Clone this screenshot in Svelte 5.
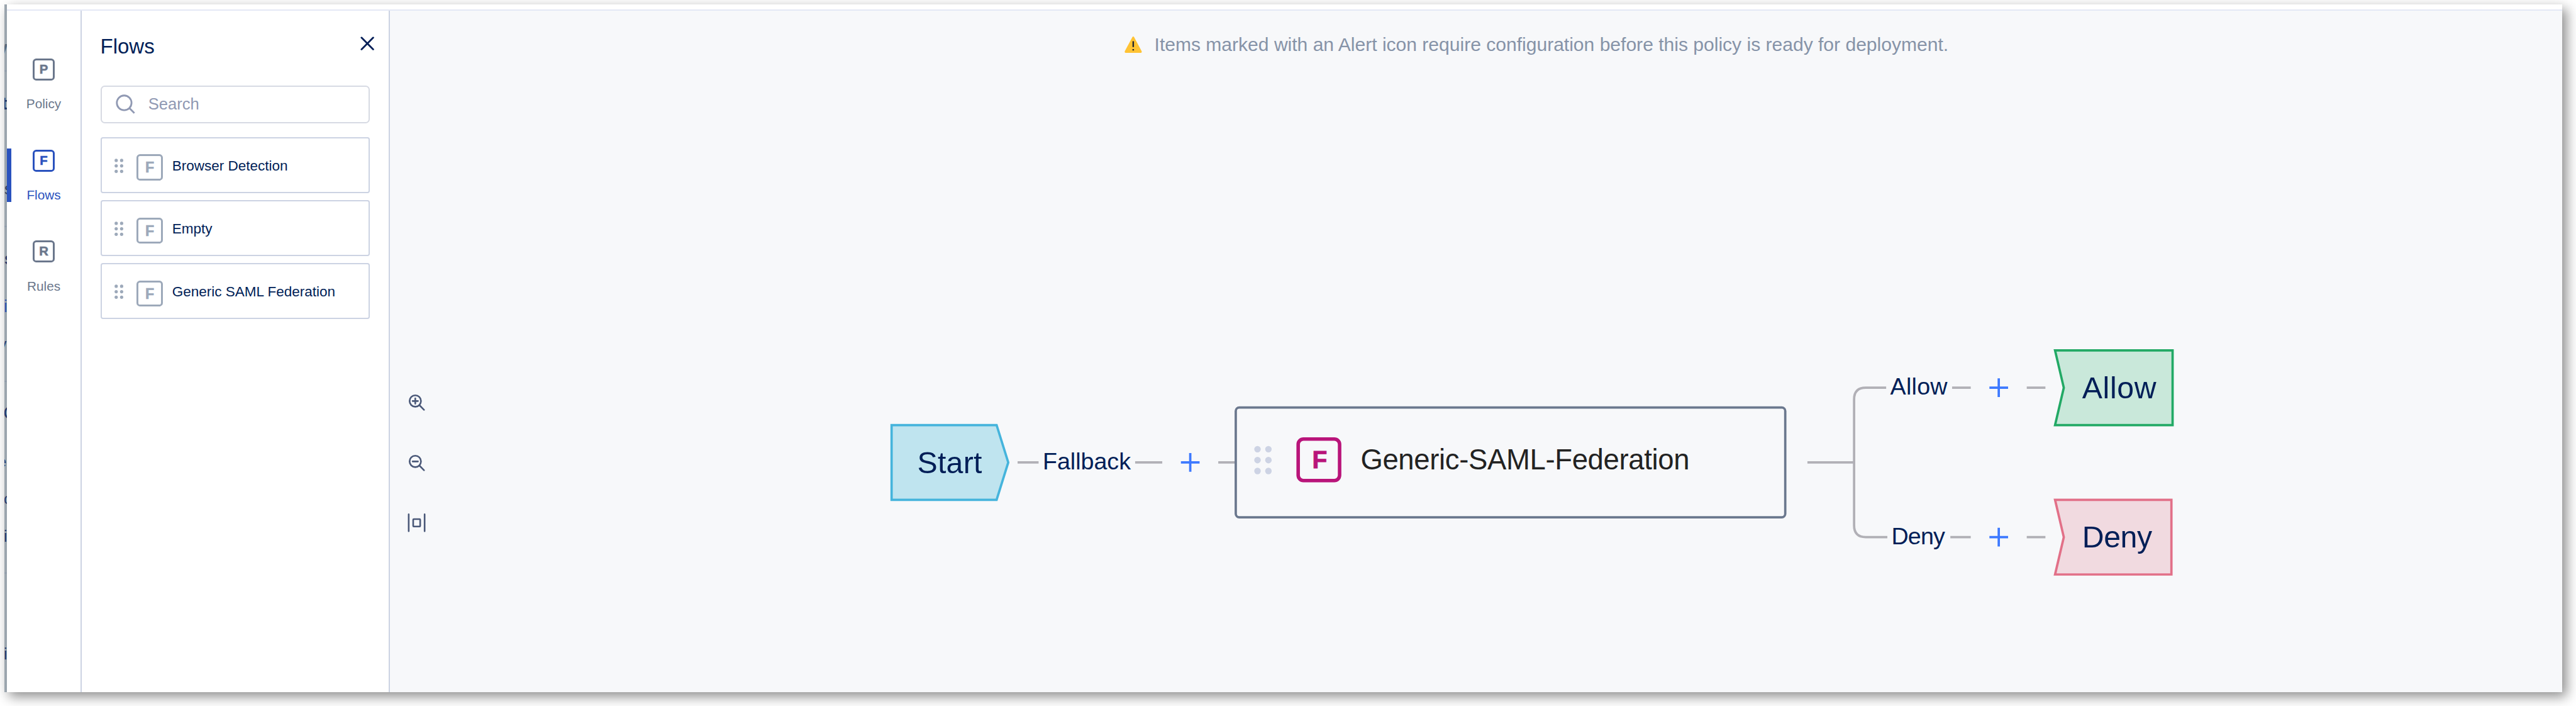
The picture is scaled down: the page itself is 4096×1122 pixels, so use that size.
<script>
  const tabs = [
    { letter: 'P', label: 'Policy', active: false },
    { letter: 'F', label: 'Flows', active: true },
    { letter: 'R', label: 'Rules', active: false }
  ];

  const flows = ['Browser Detection', 'Empty', 'Generic SAML Federation'];
  const gripRows = [0, 9.4, 18.8];

  // Slivers of the page underneath that stay visible beside the dialog.
  const slivers = [
    { t: 'y', x: -12, base: 92, size: 32, tone: 'slate' },
    { t: 't', x: -5, base: 187, size: 30, tone: 'bold' },
    { t: 's', x: 0, base: 333, size: 27, tone: 'dark' },
    { t: 's', x: 0, base: 453, size: 27, tone: 'bold' },
    { t: 'i', x: -1, base: 535, size: 29, tone: 'blue' },
    { t: 'v', x: -9, base: 599, size: 25, tone: 'navy' },
    { t: 'C', x: -2, base: 719, size: 32, tone: 'navy' },
    { t: 'e', x: -11, base: 801, size: 26, tone: 'navy' },
    { t: 'c', x: -1, base: 865, size: 26, tone: 'navy' },
    { t: 'i', x: -1, base: 929, size: 27, tone: 'navy' },
    { t: 'i', x: -1, base: 1131, size: 27, tone: 'navy' }
  ];
  const sliverLines = [121, 388, 654, 983];

  const branches = [
    { y: 664, label: 'Allow', labelX: 3240, labelW: 98, nearEnd: 3233, lineX: 3346, right: 3724, kind: 'allow', textX: 3569, textW: 127 },
    { y: 920, label: 'Deny', labelX: 3242, labelW: 92, nearEnd: 3235, lineX: 3343, right: 3722, kind: 'deny', textX: 3569, textW: 120 }
  ];
</script>

<div class="page">
  <div class="dialog">
    <svg class="strip" viewBox="0 0 4 1178" aria-hidden="true">
      {#each sliverLines as y}
        <rect class="sliver-line" x="0" y={y - 9} width="4" height="2" />
      {/each}
      {#each slivers as s}
        <text class="sliver {s.tone}" x={s.x} y={s.base - 8} font-size={s.size}>{s.t}</text>
      {/each}
    </svg>

    <div class="workspace">
      <nav class="rail">
        {#each tabs as tab}
          <button class="tab" class:active={tab.active}>
            <span class="tab-icon">{tab.letter}</span>
            <span class="tab-label">{tab.label}</span>
          </button>
        {/each}
      </nav>

      <aside class="panel">
        <header class="panel-head">
          <h2>Flows</h2>
          <svg class="close" viewBox="0 0 24 24"><path d="M2 2L22 22M22 2L2 22" /></svg>
        </header>
        <div class="search">
          <svg class="lens" viewBox="0 0 34 34"><circle cx="14.5" cy="14.5" r="12.6" /><path d="M23.4 23.4L32 32" /></svg>
          <span>Search</span>
        </div>
        <div class="cards">
          {#each flows as flow}
            <div class="card">
              <svg class="grip" viewBox="0 0 16 25">
                {#each gripRows as y}
                  <circle cx="3" cy={y + 3.1} r="2.8" /><circle cx="12.3" cy={y + 3.1} r="2.8" />
                {/each}
              </svg>
              <span class="flow-icon">F</span>
              <span class="flow-name">{flow}</span>
            </div>
          {/each}
        </div>
      </aside>

      <main class="canvas">
        <p class="notice">
          <svg class="alert" viewBox="0 0 30 28">
            <path class="tri" d="M13.5 1.1Q15 -1 16.5 1.1L29.4 25.2Q30.2 28 27.6 28H2.4Q-.2 28 .6 25.2Z" />
            <path class="mark" d="M15 8V18M15 21.7V24" />
          </svg>
          <span>Items marked with an Alert icon require configuration before this policy is ready for deployment.</span>
        </p>

        <div class="tools">
          <svg viewBox="0 0 32 32"><circle cx="13.3" cy="13.3" r="9.8" /><path d="M20.5 20.5L28.3 28.5M8.7 13.3H17.9M13.3 8.7V17.9" /></svg>
          <svg viewBox="0 0 32 32"><circle cx="13.3" cy="13.3" r="9.8" /><path d="M20.5 20.5L28.3 28.5M8.7 13.3H17.9" /></svg>
          <svg viewBox="0 0 32 32"><path d="M2 1.5V30.5M29.3 1.5V30.5" /><rect x="9.7" y="9.7" width="12" height="12.6" rx="1" /></svg>
        </div>

        <svg class="diagram" viewBox="668 18 3724 1168">
          <g class="wires">
            <path d="M1744 792H1780M1945.5 792H1992M2088 792H2118M3098 792H3178" />
            <path d="M3233 664H3198Q3178 664 3178 684V900Q3178 920 3198 920H3235" />
            {#each branches as b}
              <path d="M{b.lineX} {b.y}H3378M3474 {b.y}H3506" />
            {/each}
          </g>
          <g class="adds">
            <path d="M2024 792H2056M2040 776V808" />
            {#each branches as b}
              <path d="M3410 {b.y}H3442M3426 {b.y - 16}V{b.y + 16}" />
            {/each}
          </g>

          <path class="node start" d="M1528 728H1708L1728 792L1708 856H1528Z" />
          <text class="node-text" x="1572" y="810" textLength="111">Start</text>
          <text class="edge-text" x="1787" y="804" textLength="151">Fallback</text>

          <rect class="flow-node" x="2118" y="698" width="942" height="188" rx="6" />
          <g class="node-grip">
            {#each [769.3, 788, 806.7] as y}
              <circle cx="2155.3" cy={y} r="5.6" /><circle cx="2174" cy={y} r="5.6" />
            {/each}
          </g>
          <rect class="badge" x="2225" y="752" width="71" height="71" rx="9" />
          <text class="badge-text" x="2249" y="802">F</text>
          <text class="flow-text" x="2332" y="804" textLength="564">Generic-SAML-Federation</text>

          {#each branches as b}
            <text class="edge-text" x={b.labelX} y={b.y + 12} textLength={b.labelW}>{b.label}</text>
            <path class="node {b.kind}" d="M3522.5 {b.y - 64}H{b.right}V{b.y + 64}H3522.5L3537.5 {b.y}Z" />
            <text class="node-text" x={b.textX} y={b.y + 18} textLength={b.textW}>{b.label}</text>
          {/each}
        </svg>
      </main>
    </div>
  </div>
</div>

<style>
  :global(body) {
    margin: 0;
    background: #fff;
    overflow: hidden;
  }

  .page {
    zoom: 0.92754;
    box-sizing: border-box;
    width: 4416px;
    height: 1210px;
    padding: 8px 24px 24px 8px;
    font-family: 'Liberation Sans', Arial, sans-serif;
    color: #001e57;
  }

  .page :global(*) {
    box-sizing: border-box;
  }

  .dialog {
    display: flex;
    width: 4384px;
    height: 1178px;
    background: #fff;
    box-shadow: 8px 8px 20px rgba(0, 0, 0, 0.45);
  }

  .strip {
    flex: none;
    width: 4px;
    height: 1178px;
    background: #9ba5ae;
    overflow: hidden;
  }

  .sliver-line { fill: #8f9bab; }
  .slate { fill: #596a7d; font-weight: 700; }
  .bold { fill: #24396a; font-weight: 700; }
  .dark { fill: #2f4160; }
  .navy { fill: #24396a; }
  .blue { fill: #2f55ae; }

  .workspace {
    display: flex;
    flex: 1;
    margin-top: 8px;
    border-top: 2.2px solid #e4e8f5;
  }

  .rail {
    width: 128px;
    padding-top: 80px;
    border-right: 2.2px solid #ccd3e3;
  }

  .tab {
    display: flex;
    flex-direction: column;
    align-items: center;
    width: 126px;
    height: 92px;
    margin: 0 0 64px;
    padding: 2px 0 0;
    border: 0;
    background: none;
    font: inherit;
    color: #6b778c;
  }

  .tab.active {
    color: #2a52be;
    background: linear-gradient(#2a52be, #2a52be) no-repeat left / 4px 100%;
    border-radius: 0 4px 4px 0;
    background-size: 8px 100%;
    background-position: left;
  }

  .tab-icon {
    width: 38px;
    height: 38px;
    border: 3.3px solid;
    border-radius: 6px;
    font-size: 22px;
    font-weight: 700;
    line-height: 32px;
    text-align: center;
    -webkit-text-stroke: 0.6px;
  }

  .tab-label {
    margin-top: 25px;
    font-size: 22.4px;
    line-height: 30px;
  }

  .panel {
    width: 528px;
    padding: 32px 32px 0;
    border-right: 2.2px solid #ccd3e3;
  }

  .panel-head {
    display: flex;
    justify-content: space-between;
    height: 97px;
  }

  h2 {
    margin: 9px 0 0;
    font-size: 35.6px;
    font-weight: 400;
    line-height: 40px;
  }

  .close {
    width: 24px;
    height: 24px;
    margin: 12px -8px 0 0;
    fill: none;
    stroke: currentColor;
    stroke-width: 3;
    stroke-linecap: round;
  }

  .search {
    display: flex;
    align-items: center;
    gap: 22px;
    width: 462px;
    height: 64px;
    padding-left: 24px;
    border: 2.2px solid #d7dae3;
    border-radius: 7px;
    font-size: 27.6px;
    line-height: 34px;
    color: #9099b3;
  }

  .lens {
    width: 34px;
    height: 34px;
    fill: none;
    stroke: currentColor;
    stroke-width: 3;
  }

  .cards {
    display: flex;
    flex-direction: column;
    gap: 12px;
    margin-top: 24px;
  }

  .card {
    display: flex;
    align-items: center;
    width: 462px;
    height: 96px;
    padding-left: 22px;
    border: 2.2px solid #ccd3e3;
    border-radius: 4px;
  }

  .grip {
    width: 16px;
    height: 25px;
    margin: 2px 22px 0 0;
    fill: #9da9ba;
  }

  .flow-icon {
    width: 45px;
    height: 45px;
    margin: 8px 16px 0 0;
    border: 3.3px solid #9da9ba;
    border-radius: 6px;
    font-size: 25px;
    font-weight: 700;
    line-height: 40px;
    text-align: center;
    color: #9da9ba;
    -webkit-text-stroke: 0.6px;
  }

  .flow-name {
    font-size: 24.3px;
    line-height: 32px;
    margin-top: 2px;
  }

  .canvas {
    position: relative;
    flex: 1;
    background: #f7f8fa;
  }

  .notice {
    display: flex;
    align-items: center;
    gap: 21px;
    margin: 0;
    padding: 38px 0 0 1260px;
    font-size: 32.4px;
    line-height: 40px;
    white-space: nowrap;
    color: #8693a8;
  }

  .alert {
    width: 30px;
    height: 28px;
  }

  .tri { fill: #ffc334; }
  .mark { stroke: #1f2430; stroke-width: 2.6; }

  .tools {
    display: flex;
    flex-direction: column;
    gap: 71px;
    padding: 578px 0 0 31px;
  }

  .tools svg {
    width: 32px;
    height: 32px;
    fill: none;
    stroke: #4a5878;
    stroke-width: 2.8;
    stroke-linecap: round;
  }

  /* free-form node canvas */
  .diagram {
    position: absolute;
    top: 0;
    left: 0;
    width: 3724px;
    height: 1168px;
  }

  .wires, .adds {
    fill: none;
    stroke: #b1b0b6;
    stroke-width: 4;
  }

  .adds { stroke: #3d79ff; }

  .node { stroke-width: 4; }
  .start { fill: #bfe4ef; stroke: #45b4dc; }
  .allow { fill: #c9e8da; stroke: #22a965; }
  .deny { fill: #f1dae0; stroke: #e27088; }

  .node-text, .edge-text { fill: #001e57; }
  .node-text { font-size: 52px; }
  .edge-text { font-size: 40.6px; }

  .flow-node {
    fill: none;
    stroke: #6b788e;
    stroke-width: 4;
  }

  .node-grip { fill: #cdd3e4; }

  .badge {
    fill: none;
    stroke: #b9147a;
    stroke-width: 6;
  }

  .badge-text {
    fill: #b9147a;
    stroke: #b9147a;
    font-size: 42px;
    font-weight: 700;
  }

  .flow-text {
    fill: #222;
    font-size: 49px;
  }
</style>
